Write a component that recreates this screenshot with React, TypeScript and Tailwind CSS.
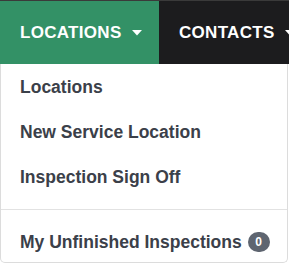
import React from "react";

function Caret() {
  return (
    <svg width="10" height="6" viewBox="0 0 10 6" className="ml-[10px] shrink-0">
      <path d="M0 0 L10 0 L5 5.5 Z" fill="#ffffff" />
    </svg>
  );
}

export default function App() {
  const font = { fontFamily: '"Liberation Sans", Arial, sans-serif' };
  return (
    <div className="w-[289px] h-[265px] bg-white overflow-hidden relative" style={font}>
      <div className="h-[1px] bg-[#3a3a3a]" />
      <div className="flex h-[63px] bg-[#1c1c1e] overflow-hidden">
        <div className="w-[159px] shrink-0 bg-[#339166] flex items-center pl-[20px] text-white font-bold text-[17px] tracking-[0.3px]">
          LOCATIONS
          <Caret />
        </div>
        <div className="shrink-0 flex items-center pl-[20px] text-white font-bold text-[17px] tracking-[0.3px] whitespace-nowrap">
          CONTACTS
          <Caret />
        </div>
      </div>
      <div className="w-[288px] h-[199px] border border-t-0 border-[#dcdcdc] rounded-b-[5px] bg-white flex flex-col text-[#3b4049] font-bold text-[17.5px] leading-[24px]">
        <div className="h-[45px] flex items-center pl-[19px]">Locations</div>
        <div className="h-[45px] flex items-center pl-[19px]">New Service Location</div>
        <div className="h-[45px] flex items-center pl-[19px]">Inspection Sign Off</div>
        <div className="h-[1px] bg-[#e2e2e2] mt-[10px]" />
        <div className="flex items-center pl-[19px] pt-[20px] whitespace-nowrap">
          My Unfinished Inspections
          <span className="ml-[6px] inline-flex items-center justify-center w-[22px] h-[20px] rounded-full bg-[#5e6570] text-white text-[12px] leading-none font-bold">0</span>
        </div>
      </div>
    </div>
  );
}
